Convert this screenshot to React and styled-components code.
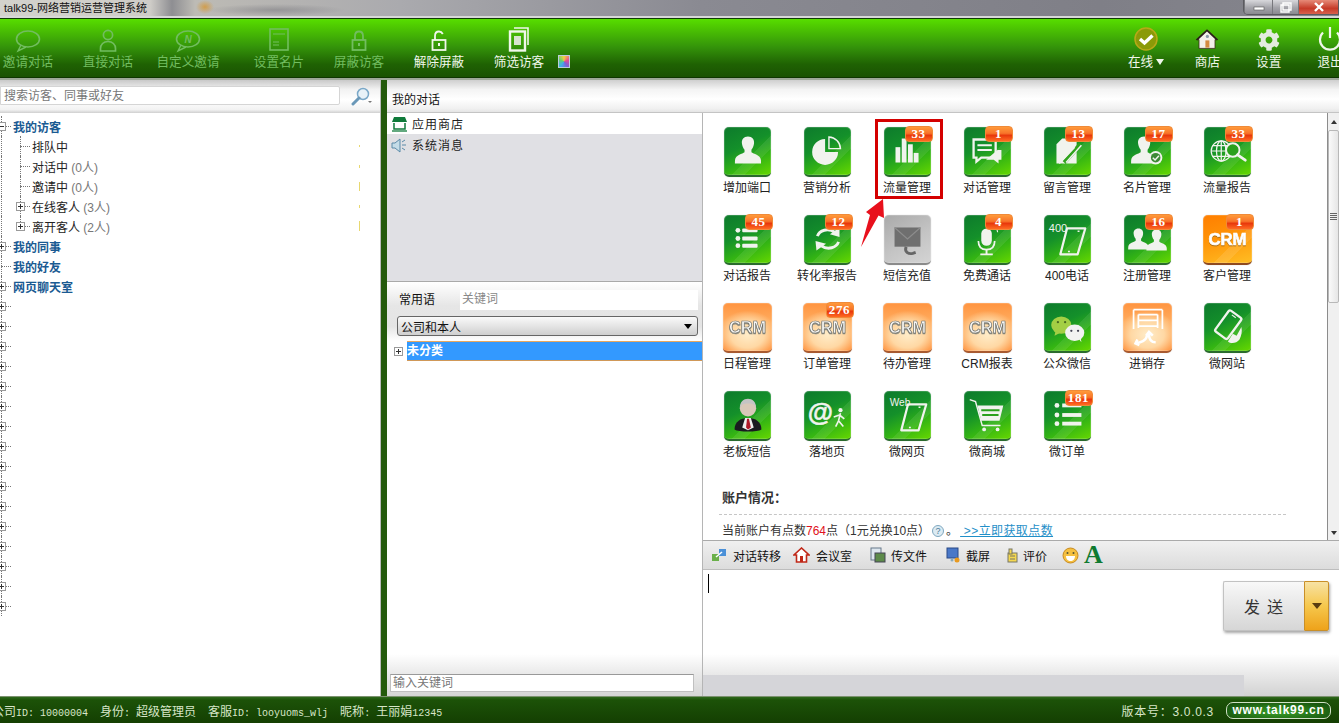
import React from "react";
import styled, { createGlobalStyle, css } from "styled-components";
import { FaCog } from "react-icons/fa";

const GlobalStyle = createGlobalStyle`
  html, body { margin: 0; padding: 0; background: #fff; overflow: hidden; }
  * { box-sizing: border-box; }
  body { font-family: "Liberation Sans", "Noto Sans CJK SC", sans-serif; font-size: 12px; color: #222; }
`;

const Page = styled.div`
  width: 1339px; height: 723px; display: flex; flex-direction: column; overflow: hidden;
`;

/* ---------- title bar ---------- */
const TitleBar = styled.div`
  height: 19px; flex: none; display: flex; justify-content: space-between; align-items: flex-start;
  border-bottom: 1px solid #123a05;
  background:
    radial-gradient(ellipse 9px 7px at 205px 7px, rgba(214,150,50,.8), transparent),
    radial-gradient(ellipse 70px 6px at 275px 10px, rgba(90,90,100,.35), transparent),
    linear-gradient(90deg, #d3d2cc 0, #cfcdc8 150px, #8e8e92 172px, #bdbbb5 195px, #aaaaae 400px, #8a8a92 700px, #7f7f87 1100px, #85858d 100%);
  box-shadow: inset 0 -2px 0 #d8d8d8;
`;
const TitleText = styled.div`
  font-size: 11px; line-height: 16px; padding-left: 4px; color: #111;
`;
const WinButtons = styled.div`
  display: flex; height: 15px; border: 1px solid #5b5b60; border-top: 0; border-radius: 0 0 0 5px; overflow: hidden;
`;
const WinButton = styled.div`
  width: ${p => p.$w}px; display: flex; align-items: center; justify-content: center;
  border-left: 1px solid #77777c;
  color: #fff;
  background: ${p => p.$close
    ? "linear-gradient(#e68a78, #c63a28 60%, #d8604c)"
    : "linear-gradient(#d8d8dc, #a4a4aa 55%, #8a8a90)"};
`;

/* ---------- toolbar ---------- */
const Toolbar = styled.div`
  height: 59px; flex: none; display: flex; padding-top: 7px; overflow: hidden;
  background: linear-gradient(#57de00 0, #4fcb01 12%, #34940a 48%, #1f6203 78%, #1a5202 100%);
  border-bottom: 1px solid #0e3600;
`;
const ToolGroup = styled.div`
  display: flex; gap: 24px; margin-left: ${p => p.$ml || 0}px;
`;
const ToolGroupRight = styled.div`
  display: flex; gap: 13.3px; margin-left: auto; margin-right: -15px;
`;
const ToolItem = styled.div`
  width: ${p => p.$w || 56}px; height: 50px; display: flex; flex-direction: column; align-items: center;
  color: ${p => p.$off ? "#72bd60" : "#f0f7ea"};
  font-size: 12.6px; white-space: nowrap; flex: none;
`;
const ToolIcon = styled.div`
  height: 28px; display: flex; align-items: center; justify-content: center;
`;
const ToolLabel = styled.div`
  line-height: 16px; display: flex; align-items: center; gap: 3px;
`;
const Rainbow = styled.div`
  width: 12px; height: 13px; flex: none; align-self: flex-start; margin: 29px 0 0 -13px; border: 1px solid #bcd;
  background: conic-gradient(#f5d040, #e84a90, #7a60d8, #40b0e8, #60d070, #f5d040);
`;
const Strip = styled.div`
  height: 2px; flex: none; background: #9fa99a;
`;

/* ---------- workspace ---------- */
const Workspace = styled.div`
  flex: 1; display: flex; min-height: 0;
`;
const LeftPane = styled.div`
  width: 381px; flex: none; display: flex; flex-direction: column; overflow: hidden; border-right: 1px solid #bbb;
`;
const SearchRow = styled.div`
  height: 33px; flex: none; display: flex; align-items: flex-start; padding-top: 6px; gap: 9px;
  background: linear-gradient(#c9c9c9 0, #f2f2f2 28%, #fff 60%, #f2f2f2 90%, #cfcfcf 100%);
`;
const SearchBox = styled.div`
  width: 340px; height: 19px; line-height: 18px; padding-left: 3px; background: #fff; color: #777;
  border: 1px solid #d5d5d5; border-radius: 0 2px 2px 0; font-size: 12px;
`;
const Tree = styled.div`
  flex: 1; padding-top: 3px; background: #fff; margin-left: 0; overflow: hidden;
`;
const TreeRow = styled.div`
  height: 20px; display: flex; align-items: center; margin-left: -9px;
`;
const Gutter = styled.span`
  position: relative; flex: none; height: 20px; width: ${p => p.$w}px; display: block;
  ${p => p.$v && css`
    &::before {
      content: ""; position: absolute; left: ${p.$x}px; top: 0; bottom: ${p.$end ? "10px" : "0"};
      border-left: 1px dotted #777;
    }
  `}
  ${p => p.$h && css`
    &::after {
      content: ""; position: absolute; left: ${p.$x}px; right: 2px; top: 10px; border-top: 1px dotted #777;
    }
  `}
`;
const Expander = styled.span`
  position: absolute; z-index: 1; width: 9px; height: 9px; top: 6px; left: ${p => p.$x - 4}px;
  border: 1px solid #9a9a9a; background-color: #fff;
  background-image:
    linear-gradient(#333, #333),
    ${p => p.$open ? "linear-gradient(transparent, transparent)" : "linear-gradient(#333, #333)"};
  background-size: 5px 1px, 1px 5px;
  background-position: 1px 3px, 3px 1px;
  background-repeat: no-repeat;
`;
const GroupName = styled.span`
  font-weight: 700; color: #1a5a92; font-size: 12px;
`;
const NodeName = styled.span`
  color: #222; font-size: 12px; white-space: nowrap;
  em { font-style: normal; color: #777; }
`;
const Tick = styled.i`
  width: 1px; height: ${p => p.$h}px; background: #e8d870; margin-left: auto; margin-right: 20px;
`;
const Splitter = styled.div`
  width: 6px; flex: none; background: #245a0c;
`;
const MainPane = styled.div`
  flex: 1; display: flex; flex-direction: column; min-width: 0;
`;
const MainHeader = styled.div`
  height: 33px; flex: none; line-height: 40px; padding-left: 5px; font-size: 12px; color: #111;
  border-bottom: 1px solid #c4c4c4;
  background: linear-gradient(#cfcfcf 0, #f4f4f4 30%, #fff 60%, #f0f0f0 90%, #e4e4e4 100%);
`;
const MainBody = styled.div`
  flex: 1; display: flex; min-height: 0;
`;

/* ---------- middle column ---------- */
const MidPane = styled.div`
  width: 316px; flex: none; display: flex; flex-direction: column; border-right: 1px solid #b5b5b5;
`;
const SessionList = styled.div`
  height: 169px; flex: none; background: #e0e0e4; border-bottom: 1px solid #a9a9a9;
`;
const SessionRow = styled.div`
  height: 21px; display: flex; align-items: center; gap: 4px; padding-left: 4px;
  background: ${p => p.$active ? "#fff" : "transparent"};
  letter-spacing: 1px; font-size: 12px; color: #222;
`;
const PhraseHead = styled.div`
  height: 59px; flex: none; padding: 8px 4px 0 10px; display: flex; flex-direction: column; gap: 6px;
  background: linear-gradient(#fff 0, #e6e6e6 40%, #e4e4e4 75%, #fff 100%);
`;
const PhraseTop = styled.div`
  display: flex; align-items: center; gap: 25px; padding-left: 2px;
`;
const PhraseLabel = styled.span`
  margin-top: -4px; color: #111;
`;
const PhraseInput = styled.div`
  flex: 1; height: 20px; background: #fff; color: #888; padding-left: 2px; line-height: 18px;
`;
const Select = styled.div`
  height: 20px; display: flex; justify-content: space-between; align-items: center; padding: 0 5px 0 3px;
  border: 1px solid #666; border-radius: 3px; background: linear-gradient(#fafafa, #cfcfcf); color: #111;
  &::after { content: ""; border: 4px solid transparent; border-top: 5px solid #000; border-bottom: 0; }
`;
const PhraseTree = styled.div`
  flex: 1; background: #fff; min-height: 0;
`;
const PhraseRow = styled.div`
  height: 20px; display: flex; align-items: center;
`;
const PhraseGutter = styled.span`
  position: relative; width: 20px; height: 20px; flex: none;
`;
const PhraseSelected = styled.div`
  flex: 1; height: 20px; line-height: 18px; background: #3399ff; color: #fff; font-weight: 700;
  border-top: 1px solid #e8a860; border-bottom: 1px solid #d09858;
`;
const BottomStrip = styled.div`
  height: 42px; flex: none; display: flex; align-items: flex-end;
  background: linear-gradient(#fff 0, #e8e8e8 50%, #d6d6d6 100%);
`;
const KeywordInput = styled.div`
  width: 304px; height: 18px; margin: 0 0 4px 3px; line-height: 16px; padding-left: 2px; color: #777;
  background: #fff; border: 1px solid #c0c0c0; border-top-color: #999;
`;

/* ---------- right column ---------- */
const RightPane = styled.div`
  flex: 1; display: flex; flex-direction: column; min-width: 0;
`;
const ScrollWrap = styled.div`
  height: 427px; flex: none; display: flex; overflow: hidden;
`;
const Content = styled.div`
  flex: 1; padding: 14px 0 0 4px; overflow: hidden; background: #fff;
`;
const AppGrid = styled.div`
  display: grid; grid-template-columns: repeat(7, 80px); grid-auto-rows: 88px;
`;
const AppCell = styled.div`
  position: relative; display: flex; flex-direction: column; align-items: center;
`;
const toneBg = {
  green: "linear-gradient(135deg, transparent 58%, rgba(255,255,255,.08) 58%, rgba(255,255,255,.08) 72%, transparent 72%), linear-gradient(155deg, #0d7a2c 0, #14902a 40%, #33b414 68%, #66d800 100%)",
  orange: "linear-gradient(135deg, transparent 60%, rgba(255,255,255,.1) 60%, rgba(255,255,255,.1) 74%, transparent 74%), linear-gradient(165deg, #ff7e00 0, #ff9408 45%, #ffbe24 100%)",
  pale: "radial-gradient(ellipse 62% 50% at 50% 66%, #ffecc8 0, #ffd8a4 55%, transparent 100%), linear-gradient(#ff9440, #ffad60 40%, #ff9440)",
  gray: "linear-gradient(150deg, #a9a9a9, #c4c4c4 55%, #d4d4d4)",
};
const toneEdge = { green: "#2a6b2e", orange: "#8f4a20", pale: "#a85a30", gray: "#8b8b8b" };
const Tile = styled.div`
  width: ${p => (p.$tone === "green" || p.$tone === "gray") ? 47 : 49}px; height: 50px; flex: none; position: relative;
  border-radius: 5px; background: ${p => toneBg[p.$tone]};
  border-bottom: 2px solid ${p => toneEdge[p.$tone]};
  box-shadow: inset 0 0 0 1px rgba(255,255,255,.16), 0 0 1px rgba(0,0,0,.3);
  svg { display: block; }
`;
const Badge = styled.div`
  position: absolute; top: -1px; right: -2px; width: 28px; height: 16px; z-index: 1;
  border-radius: 4px; border: 1px solid #f08a38;
  background: linear-gradient(#ff9a3a 0, #f8742a 45%, #e8380c 60%, #ff6a22 100%);
  color: #fff; font: 700 13px/14px "Liberation Serif", serif; text-align: center; letter-spacing: .6px;
`;
const AppLabel = styled.div`
  margin-top: 3px; line-height: 17px; font-size: 12px; color: #222; white-space: nowrap;
`;
const Highlight = styled.div`
  position: absolute; left: 8px; top: -8px; width: 68px; height: 80px; border: 3px solid #d40000; pointer-events: none;
`;
const Arrow = styled.svg`
  position: absolute; left: -8px; top: 70px; z-index: 2;
`;
const AccountTitle = styled.div`
  margin: 10px 0 0 15px; font-size: 13px; font-weight: 700; color: #333; line-height: 18px;
`;
const AccountRule = styled.div`
  margin: 7px 0 0 12px; width: 567px; border-top: 1px dashed #c6c6c6;
`;
const AccountText = styled.div`
  margin: 7px 0 0 15px; line-height: 18px; color: #333; white-space: nowrap; display: flex; align-items: center;
  b { font-weight: 400; color: #e01020; }
  a { color: #1f8fc8; text-decoration: underline; margin-left: 2px; letter-spacing: .4px; }
`;
const HelpDot = styled.span`
  display: inline-block; width: 12px; height: 12px; margin: 0 2px; border-radius: 50%; text-align: center;
  border: 1px solid #7fa8c0; background: #dcebf3; color: #4a7a98; font: 9px/10px "Liberation Sans", sans-serif;
`;
const Scrollbar = styled.div`
  width: 12px; flex: none; display: flex; flex-direction: column; background: #f0f0f0; border-left: 1px solid #8c8c8c;
`;
const ScrollBtn = styled.div`
  height: ${p => p.$h}px; flex: none; display: flex; align-items: center; justify-content: center;
  &::after {
    content: ""; border: 3px solid transparent;
    ${p => p.$up ? "border-bottom: 4px solid #333; border-top: 0;" : "border-top: 4px solid #333; border-bottom: 0;"}
  }
`;
const ScrollThumb = styled.div`
  height: 173px; flex: none; border: 1px solid #b8b8b8; border-radius: 2px; display: flex; align-items: center; justify-content: center;
  background: linear-gradient(90deg, #fafafa, #e6e6e6);
  &::after { content: ""; width: 7px; height: 7px; background: repeating-linear-gradient(#666 0 1px, transparent 1px 2px); }
`;
const ScrollTrack = styled.div`
  flex: 1;
`;
const ToolsRow = styled.div`
  height: 30px; flex: none; display: flex; align-items: center; padding-left: 8px; font-size: 12px; color: #111;
  background: linear-gradient(#f0f0f0, #dcdcdc);
  border-top: 1px solid #aaa; border-bottom: 1px solid #bdbdbd;
`;
const ToolBtn = styled.div`
  display: flex; align-items: center; gap: ${p => p.$gap ?? 6}px; margin-right: ${p => p.$mr}px; white-space: nowrap;
`;
const FontA = styled.span`
  font: 700 26px/24px "Liberation Serif", serif; color: #0f7a30;
`;
const Editor = styled.div`
  flex: 1; background: #fff; display: flex; justify-content: space-between; align-items: flex-start; padding: 4px 10px 0 5px; min-height: 0;
`;
const Caret = styled.div`
  width: 1px; height: 19px; background: #000;
`;
const SendButton = styled.div`
  width: 106px; height: 50px; display: flex; margin-top: 7px; box-shadow: 1px 2px 3px rgba(0,0,0,.35); border-radius: 2px;
`;
const SendMain = styled.div`
  flex: 1; display: flex; align-items: center; justify-content: center; font-size: 16px; letter-spacing: 7px; color: #333; padding-left: 6px;
  border: 1px solid #c2c2c2; border-right: 0; border-radius: 2px 0 0 2px;
  background: linear-gradient(#f8f8f8, #d6d6d6);
`;
const SendDrop = styled.div`
  width: 25px; display: flex; align-items: center; justify-content: center;
  border: 1px solid #c98f28; border-radius: 0 2px 2px 0;
  background: linear-gradient(#f7e2a4, #f6c74c 50%, #eea21a);
  &::after { content: ""; border: 5px solid transparent; border-top: 6px solid #5a3c10; border-bottom: 0; }
`;
const RightBottom = styled.div`
  height: 42px; flex: none; display: flex; align-items: flex-end;
  background: linear-gradient(#fff 0, #e8e8e8 50%, #d2d2d2 100%);
`;
const RightBottomFill = styled.div`
  width: 541px; height: 21px; background: #d5d5d9;
`;

/* ---------- status bar ---------- */
const StatusBar = styled.div`
  height: 27px; flex: none; display: flex; align-items: center; color: #d7e6c8; font-size: 12px; overflow: hidden;
  background: linear-gradient(#2f6a1c 0, #1c5208 12%, #143f02 100%);
  border-top: 1px solid #7d9270;
`;
const StatusLeft = styled.div`
  display: flex; gap: 12px; margin-left: -8px;
`;
const StatusItem = styled.span`
  white-space: nowrap; font-size: 12px;
`;
const Mono = styled.span`
  font-family: "Liberation Mono", monospace; font-size: 10px;
`;
const StatusRight = styled.div`
  margin-left: auto; display: flex; align-items: center; gap: 12px; padding-right: 8px;
`;
const Version = styled.span`
  letter-spacing: .7px;
`;
const SitePill = styled.div`
  width: 105px; height: 17px; border: 1px solid #cfe0c4; border-radius: 7px; text-align: center; line-height: 15px;
  font: 700 12px/15px "Liberation Sans", sans-serif; letter-spacing: .75px; color: #fff;
  background: radial-gradient(ellipse at 50% 60%, #3aa028, #12480a);
`;

/* ---------- drawings ---------- */
const S = ({ w, h, vb, children }) => <svg width={w} height={h} viewBox={vb || `0 0 ${w} ${h}`}>{children}</svg>;

const Tool = {
  bubble: <S w={40} h={28}><ellipse cx="20" cy="13" rx="11.5" ry="8" fill="none" stroke="currentColor" strokeWidth="1.6"/><path d="M13 19l-3 6 8-4" fill="none" stroke="currentColor" strokeWidth="1.4"/></S>,
  person: <S w={40} h={28}><circle cx="20" cy="9" r="4.6" fill="none" stroke="currentColor" strokeWidth="1.7"/><path d="M12.5 25v-2.5c0-4 3-7 7.5-7s7.5 3 7.5 7V25z" fill="none" stroke="currentColor" strokeWidth="1.7"/></S>,
  bubbleN: <S w={40} h={28}><ellipse cx="20" cy="13" rx="11.5" ry="8" fill="none" stroke="currentColor" strokeWidth="1.6"/><path d="M13 19l-3 6 8-4" fill="none" stroke="currentColor" strokeWidth="1.4"/><text x="20" y="17" textAnchor="middle" fontSize="10" fontStyle="italic" fontWeight="700" fill="currentColor" fontFamily="Liberation Sans">N</text></S>,
  card: <S w={40} h={28}><rect x="11" y="3" width="18" height="21" fill="none" stroke="currentColor" strokeWidth="1.6"/><path d="M14 8h12M14 16h6M14 19h6" stroke="currentColor" strokeWidth="1.2"/></S>,
  lock: <S w={40} h={28}><path d="M16 14v-4c0-3 1.500-4.500 4-4.500s4 1.500 4 4.500v4" fill="none" stroke="currentColor" strokeWidth="1.800"/><rect x="13.500" y="14" width="13" height="10" fill="none" stroke="currentColor" strokeWidth="1.800"/><rect x="19" y="17" width="2" height="3" fill="currentColor"/></S>,
  unlock: <S w={40} h={28}><path d="M16 14v-4c0-3 1.500-4.500 4-4.500 2 0 3 1 3.800 2.500" fill="none" stroke="currentColor" strokeWidth="1.800"/><rect x="13.500" y="14" width="13" height="10" fill="none" stroke="currentColor" strokeWidth="1.800"/><rect x="19" y="17" width="2" height="3" fill="currentColor"/></S>,
  filter: <S w={40} h={28}><path d="M15 2h14v17" fill="none" stroke="currentColor" strokeWidth="1.6"/><rect x="11" y="5.500" width="15" height="19" fill="none" stroke="currentColor" strokeWidth="2.4"/><rect x="15" y="10" width="7" height="9" fill="#d8e4d0"/></S>,
  check: <S w={40} h={28}><circle cx="20" cy="13" r="11" fill="#8a9a08" stroke="#b8a818" strokeWidth="1.5"/><path d="M14 13l4.500 4 8-7.500" fill="none" stroke="#fff" strokeWidth="3.400"/></S>,
  house: <S w={40} h={28} vb="-5 -3 50 35"><path d="M20 2L7 14h3v11h20V14h3z" fill="#f3f0ea" stroke="#3a2a1a" strokeWidth="1"/><path d="M20 1L6 14l2 1L20 4l12 11 2-1z" fill="#2a2018"/><rect x="18" y="15" width="5" height="9" fill="#d48a40"/><circle cx="20.500" cy="10" r="2" fill="#8a9aa8"/></S>,
  power: <S w={40} h={28}><path d="M13 6.500a10 10 0 1 0 14 0" fill="none" stroke="currentColor" strokeWidth="2.200"/><path d="M20 1v11" stroke="currentColor" strokeWidth="2.200"/></S>,
};

const W = "#f1f3ee";
const bust = (x, y, k = 1) => (
  <path transform={`translate(${x} ${y}) scale(${k})`} fill={W} d="M0-14c-4.500 0-6.800 3.200-6.300 7.300.3 2.700 1.400 5 2.700 6.400v2.700C-5.500 4.200-13 5-13.500 10.500c-.1 1-.1 3.500-.1 3.500h27.200s0-2.500-.1-3.500C13 5 5.500 4.200 3.600 2.400v-2.700C4.900-1.700 6-4 6.300-6.700 6.800-10.800 4.500-14 0-14z"/>
);
const phoneTilt = (
  <g fill="none" stroke={W} strokeWidth="2.300" strokeLinejoin="round"><path d="M23 14h19L34 41H16z"/><path d="M34 17h2M24 38h2" strokeWidth="1.500"/></g>
);
const Glyph = {
  user: bust(24, 24),
  pie: <g><path d="M21 12.500A13.500 13.500 0 1 0 34.500 26H21z" fill={W}/><path d="M25 10.500A12.500 12.500 0 0 1 37 22.500H25z" fill="none" stroke={W} strokeWidth="1.500"/></g>,
  bars: <g fill={W}><rect x="11" y="21" width="5" height="16"/><rect x="17.500" y="12" width="5" height="25"/><rect x="24" y="18" width="5" height="19"/><rect x="30" y="27" width="5" height="10"/></g>,
  chat: <g><path d="M9 13h23v19H17l-5 4v-4H9z" fill="none" stroke={W} strokeWidth="2.400"/><path d="M13 19h15M13 24h15" stroke={W} strokeWidth="2"/><path d="M34 24h4v10h-3v4l-5-4h-8" fill={W}/></g>,
  note: <g><path d="M12 18l6-6h15v26H12z" fill={W}/><path d="M20 37l17-19" stroke="#2fa31c" strokeWidth="4.500"/><path d="M22 37l16-18M15 38l16-17" stroke={W} strokeWidth="1.500"/></g>,
  card: <g>{bust(20, 24)}<circle cx="32" cy="32" r="7" fill={W}/><circle cx="32" cy="32" r="5" fill="#3d8a35"/><path d="M29 32l2.400 2.400 4-4.400" fill="none" stroke={W} strokeWidth="1.500"/></g>,
  globe: <g fill="none" stroke={W} strokeWidth="1.300"><circle cx="17" cy="25" r="10.500"/><ellipse cx="17" cy="25" rx="5" ry="10.500"/><path d="M17 14.500v21M6.500 25h21M8 19.500h18M8 30.500h18"/><circle cx="29" cy="24" r="7" fill="#2aa01c" strokeWidth="2"/><path d="M34 29l8 5.500" strokeWidth="3" strokeLinecap="round"/></g>,
  list: <g fill={W}><circle cx="13.500" cy="16" r="2.500"/><circle cx="13.500" cy="24.500" r="2.500"/><circle cx="13.500" cy="32" r="2.500"/><rect x="18" y="14" width="16" height="4" rx="1"/><rect x="18" y="22.500" width="16" height="4" rx="1"/><rect x="18" y="30" width="16" height="4" rx="1"/></g>,
  refresh: <g fill="none" stroke={W} strokeWidth="3"><path d="M13 22c2-6 11-9 18-4"/><path d="M35 28c-2 6-11 9-18 4"/><path d="M26 20l10 3 0-10z" fill={W} stroke="none"/><path d="M22 30L11 27l1 10z" fill={W} stroke="none"/></g>,
  mail: <g><path d="M10 13h27v20H10z" fill="#6f6f6f"/><path d="M10 13l13.500 12L37 13" fill="none" stroke="#8d8d8d" strokeWidth="1.200"/><path d="M22 33c-2 6 3 8 7 7l3-1" fill="none" stroke="#666" strokeWidth="3"/></g>,
  mic: <g><rect x="17" y="14" width="11" height="18" rx="5.500" fill={W}/><path d="M14 27c0 7 4 9 8.500 9s8.500-2 8.500-9" fill="none" stroke={W} strokeWidth="1.800"/><path d="M22.500 36v4M16 41h13" stroke={W} strokeWidth="2"/><path d="M33 15c1 1 1 2 1 3M37 15l1-2" stroke={W} strokeWidth="1.200"/></g>,
  phone400: <g><text x="4" y="18" fontSize="11.500" fill={W} fontFamily="Liberation Sans">400</text>{phoneTilt}</g>,
  people: <g>{bust(14, 25, .78)}{bust(33, 26, .78)}</g>,
  crm: <text x="24.500" y="31" textAnchor="middle" fontSize="17.500" fontWeight="700" fill="#fff" stroke="#fff" strokeWidth=".7" fontFamily="Liberation Sans" style={{ filter: "drop-shadow(0 1px 0 #a86a10)" }}>CRM</text>,
  crmPale: <text x="24.500" y="31" textAnchor="middle" fontSize="17" fontWeight="700" fill="#f6f6f4" stroke="#6a6a64" strokeWidth=".6" fontFamily="Liberation Sans" style={{ filter: "drop-shadow(0 1px 0 #8a8a80)" }}>CRM</text>,
  wechat: <g><ellipse cx="17" cy="23" rx="10.500" ry="9" fill="#a4cf44"/><path d="M11 29l-1 5 6-3z" fill="#a4cf44"/><circle cx="13.500" cy="20" r="1.200" fill="#4a6a20"/><circle cx="21" cy="20" r="1.200" fill="#4a6a20"/><ellipse cx="31" cy="31" rx="10" ry="8.500" fill="#f2f2f2"/><path d="M35 37l3 4-1-6z" fill="#f2f2f2"/><circle cx="27.500" cy="29" r="1.200" fill="#445"/><circle cx="34.500" cy="29" r="1.200" fill="#445"/></g>,
  stock: <g fill="none" stroke="#fff" strokeWidth="1.800"><path d="M10 7v20M40 7v20M10 7h30M15 12h20M15 18h20M15 24h20M15 12v14M35 12v14"/><path d="M33 41c-5 0-7-3-7-9M30 34l-4-4-3 4M12 42c5-1 11-2 12-8M14 38l-2 4 4 2" strokeWidth="2.600"/></g>,
  site: <g><g transform="rotate(36 24 23)"><rect x="16" y="9" width="16" height="27" rx="2" fill="none" stroke={W} strokeWidth="2.400"/><path d="M21 12h5" stroke={W} strokeWidth="1.200"/></g><path d="M24 40c3 3 9 2 12-2 2-4 3-8 2-13l-5 9-4-2z" fill={W}/></g>,
  boss: <g><path d="M10 40c0-8 6-12 14-12s14 4 14 12c-4 3-24 3-28 0z" fill="#1a1a20"/><path d="M21 28h6l3 10-6 3-6-3z" fill="#eee"/><path d="M23 29h2l2 9-3 2-2-2z" fill="#b01828"/><circle cx="24" cy="18" r="8.500" fill="#d8c8b8"/><path d="M15.500 18c0-7 4-10 8.500-10s8.500 3 8.500 10c-2-4-3-5-8.500-5s-6.500 1-8.500 5z" fill="#c4c4c4"/></g>,
  landing: <g><text x="16" y="31" textAnchor="middle" fontSize="27" fontWeight="700" fill={W} stroke={W} strokeWidth=".5" fontFamily="Liberation Sans">@</text><circle cx="37" cy="20" r="2.200" fill={W}/><path d="M37 23l-2 8-3 6M35 31l5 6M36 25l5 4M36 25l-6 2" stroke={W} strokeWidth="1.700" fill="none"/></g>,
  web: <g><text x="5" y="16" fontSize="10.500" fill={W} fontFamily="Liberation Sans">Web</text><g transform="translate(1 0)">{phoneTilt}</g></g>,
  cart: <g fill="none" stroke={W}><path d="M5 9l6 2 7 25h19" strokeWidth="1.500"/><path d="M13 15h27l-4 16H17z" fill={W} stroke="none"/><path d="M17 20h19M18 25h17" stroke="#2aa01c" strokeWidth="2"/><circle cx="20" cy="40" r="2" fill={W} stroke="none"/><circle cx="34" cy="40" r="2" fill={W} stroke="none"/></g>,
  order: <g fill={W}><circle cx="12.500" cy="15" r="2.500"/><circle cx="12.500" cy="25" r="2.500"/><circle cx="12.500" cy="34" r="2.500"/><rect x="18" y="13" width="20" height="4"/><rect x="18" y="23" width="20" height="4"/><rect x="18" y="32" width="20" height="4"/></g>,
};

const APPS = [
  ["增加端口", "green", "user"], ["营销分析", "green", "pie"], ["流量管理", "green", "bars", "33"], ["对话管理", "green", "chat", "1"],
  ["留言管理", "green", "note", "13"], ["名片管理", "green", "card", "17"], ["流量报告", "green", "globe", "33"],
  ["对话报告", "green", "list", "45"], ["转化率报告", "green", "refresh", "12"], ["短信充值", "gray", "mail"], ["免费通话", "green", "mic", "4"],
  ["400电话", "green", "phone400"], ["注册管理", "green", "people", "16"], ["客户管理", "orange", "crm", "1"],
  ["日程管理", "pale", "crmPale"], ["订单管理", "pale", "crmPale", "276"], ["待办管理", "pale", "crmPale"], ["CRM报表", "pale", "crmPale"],
  ["公众微信", "green", "wechat"], ["进销存", "pale", "stock"], ["微网站", "green", "site"],
  ["老板短信", "green", "boss"], ["落地页", "green", "landing"], ["微网页", "green", "web"], ["微商城", "green", "cart"], ["微订单", "green", "order", "181"],
];

const Level1 = ({ open, plain, children }) => (
  <TreeRow>
    <Gutter $w={22} $v $h $x={10}>{!plain && <Expander $x={10} $open={open} />}</Gutter>
    {children}
  </TreeRow>
);
const Level2 = ({ expand, last, children, tick }) => (
  <TreeRow>
    <Gutter $w={22} $v $x={10} />
    <Gutter $w={19} $v $h $x={7} $end={last}>{expand && <Expander $x={7} />}</Gutter>
    {children}
    {tick && <Tick $h={tick} />}
  </TreeRow>
);

export default function App() {
  return (
    <Page>
      <GlobalStyle />
      <TitleBar>
        <TitleText>talk99-网络营销运营管理系统</TitleText>
        <WinButtons>
          <WinButton $w={28}><S w={12} h={8}><rect x="1" y="4" width="10" height="3" fill="#fff" stroke="#555" strokeWidth=".6"/></S></WinButton>
          <WinButton $w={26}><S w={12} h={11}><path d="M3 1h8v7H3zM1 3h8v7H1z" fill="none" stroke="#fff" strokeWidth="1.400"/></S></WinButton>
          <WinButton $w={40} $close><S w={12} h={10}><path d="M2 1l8 8M10 1L2 9" stroke="#fff" strokeWidth="2.400"/></S></WinButton>
        </WinButtons>
      </TitleBar>

      <Toolbar>
        <ToolGroup>
          <ToolItem $off><ToolIcon>{Tool.bubble}</ToolIcon><ToolLabel>邀请对话</ToolLabel></ToolItem>
          <ToolItem $off><ToolIcon>{Tool.person}</ToolIcon><ToolLabel>直接对话</ToolLabel></ToolItem>
          <ToolItem $off><ToolIcon>{Tool.bubbleN}</ToolIcon><ToolLabel>自定义邀请</ToolLabel></ToolItem>
        </ToolGroup>
        <ToolGroup $ml={35}>
          <ToolItem $off><ToolIcon>{Tool.card}</ToolIcon><ToolLabel>设置名片</ToolLabel></ToolItem>
          <ToolItem $off><ToolIcon>{Tool.lock}</ToolIcon><ToolLabel>屏蔽访客</ToolLabel></ToolItem>
          <ToolItem><ToolIcon>{Tool.unlock}</ToolIcon><ToolLabel>解除屏蔽</ToolLabel></ToolItem>
          <ToolItem><ToolIcon>{Tool.filter}</ToolIcon><ToolLabel>筛选访客</ToolLabel></ToolItem>
          <Rainbow />
        </ToolGroup>
        <ToolGroupRight>
          <ToolItem $w={48}><ToolIcon>{Tool.check}</ToolIcon><ToolLabel>在线<S w={8} h={6}><path d="M0 0h8L4 6z" fill="currentColor"/></S></ToolLabel></ToolItem>
          <ToolItem $w={48}><ToolIcon>{Tool.house}</ToolIcon><ToolLabel>商店</ToolLabel></ToolItem>
          <ToolItem $w={48}><ToolIcon><FaCog size={22} color="#e4ebdf" /></ToolIcon><ToolLabel>设置</ToolLabel></ToolItem>
          <ToolItem $w={48}><ToolIcon>{Tool.power}</ToolIcon><ToolLabel>退出</ToolLabel></ToolItem>
        </ToolGroupRight>
      </Toolbar>
      <Strip />

      <Workspace>
        <LeftPane>
          <SearchRow>
            <SearchBox>搜索访客、同事或好友</SearchBox>
            <S w={24} h={20}>
              <circle cx="14" cy="8" r="5.500" fill="#e8f2f8" stroke="#7aa8c8" strokeWidth="1.500"/>
              <path d="M10 12l-6 6" stroke="#6a98b8" strokeWidth="3" strokeLinecap="round"/>
              <path d="M19 15h4l-2 2z" fill="#777"/>
            </S>
          </SearchRow>
          <Tree>
            <Level1 open><GroupName>我的访客</GroupName></Level1>
            <Level2 tick={2}><NodeName>排队中</NodeName></Level2>
            <Level2 tick={3}><NodeName>对话中 <em>(0人)</em></NodeName></Level2>
            <Level2 tick={9}><NodeName>邀请中 <em>(0人)</em></NodeName></Level2>
            <Level2 expand tick={3}><NodeName>在线客人 <em>(3人)</em></NodeName></Level2>
            <Level2 expand last tick={10}><NodeName>离开客人 <em>(2人)</em></NodeName></Level2>
            <Level1><GroupName>我的同事</GroupName></Level1>
            <Level1 plain><GroupName>我的好友</GroupName></Level1>
            <Level1><GroupName>网页聊天室</GroupName></Level1>
            {Array.from({ length: 16 }, (_, i) => <Level1 key={i} />)}
          </Tree>
        </LeftPane>
        <Splitter />
        <MainPane>
          <MainHeader>我的对话</MainHeader>
          <MainBody>
            <MidPane>
              <SessionList>
                <SessionRow $active>
                  <S w={17} h={16}><path d="M3 1h11l2 5H1z" fill="#0f7a3a"/><path d="M3 7v6h11V7" fill="none" stroke="#0f7a3a" strokeWidth="1.500"/><path d="M1 15h15" stroke="#0f7a3a" strokeWidth="1.300"/></S>
                  应用商店
                </SessionRow>
                <SessionRow>
                  <S w={17} h={16}><path d="M1 6h3l5-4v13l-5-4H1z" fill="#c4dce8" stroke="#5a8aa8"/><path d="M11 5l3-2M11 8h4M11 11l3 2" stroke="#5a8aa8" strokeWidth="1"/></S>
                  系统消息
                </SessionRow>
              </SessionList>
              <PhraseHead>
                <PhraseTop><PhraseLabel>常用语</PhraseLabel><PhraseInput>关键词</PhraseInput></PhraseTop>
                <Select>公司和本人</Select>
              </PhraseHead>
              <PhraseTree>
                <PhraseRow>
                  <PhraseGutter><Expander $x={11} /></PhraseGutter>
                  <PhraseSelected>未分类</PhraseSelected>
                </PhraseRow>
              </PhraseTree>
              <BottomStrip><KeywordInput>输入关键词</KeywordInput></BottomStrip>
            </MidPane>
            <RightPane>
              <ScrollWrap>
                <Content>
                  <AppGrid>
                    {APPS.map(([name, tone, icon, badge], i) => (
                      <AppCell key={name}>
                        <Tile $tone={tone}>
                          <S w={tone === "green" || tone === "gray" ? 47 : 49} h={48} vb={`0 0 ${tone === "green" || tone === "gray" ? 47 : 49} 50`}>{Glyph[icon]}</S>
                          {badge && <Badge>{badge}</Badge>}
                        </Tile>
                        <AppLabel>{name}</AppLabel>
                        {i === 2 && <Highlight />}
                        {i === 2 && (
                          <Arrow width="30" height="56" viewBox="0 0 30 56">
                            <path d="M2 50L11 18 7 15 24 2 25 21 19.500 18.500z" fill="#e8101c"/>
                          </Arrow>
                        )}
                      </AppCell>
                    ))}
                  </AppGrid>
                  <AccountTitle>账户情况：</AccountTitle>
                  <AccountRule />
                  <AccountText>
                    当前账户有点数<b>764</b>点（1元兑换10点）<HelpDot>?</HelpDot>。<a>&nbsp;&gt;&gt;立即获取点数</a>
                  </AccountText>
                </Content>
                <Scrollbar>
                  <ScrollBtn $h={17} $up />
                  <ScrollThumb />
                  <ScrollTrack />
                  <ScrollBtn $h={14} />
                </Scrollbar>
              </ScrollWrap>
              <ToolsRow>
                <ToolBtn $mr={12}>
                  <S w={16} h={14}><rect x="1" y="6" width="7" height="7" fill="#6ab04a"/><rect x="8" y="1" width="7" height="7" fill="#4a90d8"/><path d="M5 9l6-5" stroke="#fff" strokeWidth="1.500"/></S>
                  对话转移
                </ToolBtn>
                <ToolBtn $mr={18}>
                  <S w={17} h={16}><path d="M8.500 1L1 8h2.500v7h10V8H16z" fill="#fff" stroke="#c02818" strokeWidth="1.600"/><rect x="7" y="9" width="3" height="6" fill="#c02818"/></S>
                  会议室
                </ToolBtn>
                <ToolBtn $gap={5} $mr={19}>
                  <S w={16} h={16}><rect x="1" y="1" width="10" height="12" fill="#dde6ee" stroke="#66788a"/><rect x="5" y="6" width="10" height="9" fill="#5c8a4a" stroke="#445"/></S>
                  传文件
                </ToolBtn>
                <ToolBtn $gap={5} $mr={17}>
                  <S w={15} h={16}><rect x="1" y="1" width="11" height="10" fill="#4a78c8" stroke="#2a4a88"/><circle cx="11" cy="13" r="2.500" fill="#e89a20"/><circle cx="6" cy="13" r="1.500" fill="#8ab"/></S>
                  截屏
                </ToolBtn>
                <ToolBtn $gap={5} $mr={15}>
                  <S w={11} h={15}><rect x="1" y="5" width="9" height="9" fill="#f5d850" stroke="#776"/><rect x="2" y="1" width="3" height="5" fill="#f5d850" stroke="#776"/><path d="M3 8h5M3 11h5" stroke="#776"/></S>
                  评价
                </ToolBtn>
                <ToolBtn $gap={0} $mr={5}>
                  <S w={17} h={17}><circle cx="8.500" cy="8.500" r="7.500" fill="#f5c040" stroke="#c88a20"/><path d="M4 9h9c0 3-2 5-4.500 5S4 12 4 9z" fill="#fff"/><circle cx="5.500" cy="6" r="1" fill="#553"/><circle cx="11.500" cy="6" r="1" fill="#553"/></S>
                </ToolBtn>
                <FontA>A</FontA>
              </ToolsRow>
              <Editor>
                <Caret />
                <SendButton>
                  <SendMain>发送</SendMain>
                  <SendDrop />
                </SendButton>
              </Editor>
              <RightBottom><RightBottomFill /></RightBottom>
            </RightPane>
          </MainBody>
        </MainPane>
      </Workspace>

      <StatusBar>
        <StatusLeft>
          <StatusItem>公司<Mono>ID: 10000004</Mono></StatusItem>
          <StatusItem>身份<Mono>: </Mono>超级管理员</StatusItem>
          <StatusItem>客服<Mono>ID: looyuoms_wlj</Mono></StatusItem>
          <StatusItem>昵称<Mono>: </Mono>王丽娟<Mono>12345</Mono></StatusItem>
        </StatusLeft>
        <StatusRight>
          <Version>版本号：3.0.0.3</Version>
          <SitePill>www.talk99.cn</SitePill>
        </StatusRight>
      </StatusBar>
    </Page>
  );
}
